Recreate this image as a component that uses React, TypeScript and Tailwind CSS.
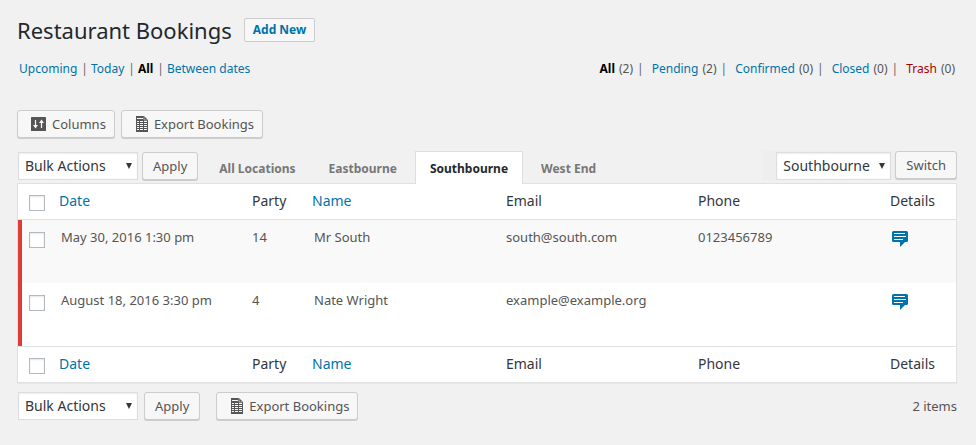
import React from "react";

type Booking = {
  id: number;
  date: string;
  party: string;
  name: string;
  email: string;
  phone: string;
};

const bookings: Booking[] = [
  { id: 1, date: "May 30, 2016 1:30 pm", party: "14", name: "Mr South", email: "south@south.com", phone: "0123456789" },
  { id: 2, date: "August 18, 2016 3:30 pm", party: "4", name: "Nate Wright", email: "example@example.org", phone: "" },
];

const link = "text-[#0073aa] hover:text-[#00a0d2]";

function ColumnsIcon() {
  return (
    <svg width="15" height="14" viewBox="0 0 15 14" aria-hidden="true">
      <rect width="15" height="14" rx="0.5" fill="#555" />
      <path d="M4.500 3v6M10.500 5v6" stroke="#f7f7f7" strokeWidth="1.2" />
      <path d="M2 8h5L4.500 11.500zM8 6h5L10.500 2.500z" fill="#f7f7f7" />
    </svg>
  );
}

function SpreadsheetIcon() {
  return (
    <svg width="13" height="16" viewBox="0 0 13 16" aria-hidden="true">
      <path d="M1 0h8l4 4v12H1z" fill="#555" />
      <path d="M9 0.500V4h3.500" fill="none" stroke="#f7f7f7" strokeWidth="0.5" />
      <path
        d="M2 2h6v1H2zM2 5h2v1H2zM5 5h3v1H5zM9 5h3v1H9zM2 7h2v1H2zM5 7h3v1H5zM9 7h3v1H9zM2 9h2v1H2zM5 9h3v1H5zM9 9h3v1H9zM2 11h2v1H2zM5 11h3v1H5zM9 11h3v1H9zM2 13h2v1H2zM5 13h3v1H5zM9 13h3v1H9z"
        fill="#f7f7f7"
      />
    </svg>
  );
}

function CommentIcon() {
  return (
    <svg width="17" height="16" viewBox="0 0 17 16" aria-hidden="true">
      <path d="M1.500 0h13q1.500 0 1.500 1.500v8q0 1.500-1.500 1.500h-1.500l-5 5v-5H1.500q-1.500 0-1.500-1.500v-8q0-1.500 1.500-1.500z" fill="#0073aa" />
      <path d="M2 2.500h11M2 5.500h12M2 8.500h9" stroke="#fff" />
    </svg>
  );
}

function Button({ children, icon }: { children: React.ReactNode; icon?: React.ReactNode }) {
  return (
    <button
      type="button"
      className={
        "flex h-7 shrink-0 items-center gap-1.5 whitespace-nowrap rounded-[3px] border border-[#ccc] bg-[#f7f7f7] text-[13px] text-[#555] shadow-[0_1px_0_#ccc] " +
        (icon ? "pr-2 pl-[13px]" : "px-2.5")
      }
    >
      {icon}
      {children}
    </button>
  );
}

function Select({ label, options, width }: { label: string; options: string[]; width: string }) {
  return (
    <div className={"relative shrink-0 " + width}>
      <select
        aria-label={label}
        className="block h-7 w-full appearance-none border border-[#ddd] bg-white pr-5 pl-1.5 text-[14px] text-[#32373c] shadow-[inset_0_1px_2px_rgba(0,0,0,0.07)]"
      >
        {options.map((o) => (
          <option key={o}>{o}</option>
        ))}
      </select>
      <svg className="pointer-events-none absolute top-[11px] right-1.5" width="6" height="6" viewBox="0 0 6 6" aria-hidden="true">
        <path d="M0 0h6L3 6z" fill="#32373c" />
      </svg>
    </div>
  );
}

function Checkbox({ label }: { label: string }) {
  return (
    <input
      type="checkbox"
      aria-label={label}
      className="block size-4 appearance-none border border-[#b4b9be] bg-white shadow-[inset_0_1px_2px_rgba(0,0,0,0.1)] checked:bg-[#0073aa]"
    />
  );
}

function HeadingRow({ label }: { label: string }) {
  const cell = "px-2 pb-px font-normal";
  return (
    <tr className="h-9 text-left text-[14px] text-[#32373c]">
      <td className="pt-0.5 pl-[11px]">
        <Checkbox label={label} />
      </td>
      <th scope="col" className={cell}>
        <a href="#date" className={link}>Date</a>
      </th>
      <th scope="col" className={cell}>Party</th>
      <th scope="col" className={cell}>
        <a href="#name" className={link}>Name</a>
      </th>
      <th scope="col" className={cell}>Email</th>
      <th scope="col" className={cell}>Phone</th>
      <th scope="col" className={cell}>Details</th>
    </tr>
  );
}

function Divider() {
  return <span className="pr-[3px] pl-1 text-[#666]">|</span>;
}

export default function App() {
  const dates = ["Upcoming", "Today", "All", "Between dates"];
  const statuses: [string, number][] = [["All", 2], ["Pending", 2], ["Confirmed", 0], ["Closed", 0], ["Trash", 0]];
  const tabs = ["All Locations", "Eastbourne", "Southbourne", "West End"];

  return (
    <main className="min-h-screen bg-[#f1f1f1] pr-[19px] pb-6 pl-[17px] font-['Noto_Sans','Open_Sans',sans-serif] text-[13px] leading-5 text-[#555]">
      <header className="flex items-center gap-3 pt-[15px]">
        <h1 className="text-[22px] leading-[30px] text-[#23282d]">Restaurant Bookings</h1>
        <button type="button" className="h-6 rounded-[2px] border border-[#ccc] bg-[#f7f7f7] px-2 text-[12px] font-bold leading-4 text-[#0073aa]">
          Add New
        </button>
      </header>

      <div className="flex flex-wrap justify-between px-0.5 pt-[14px] text-[12px]">
        <nav aria-label="Dates" className="flex">
          {dates.map((d, i) => (
            <React.Fragment key={d}>
              {i > 0 && <Divider />}
              <a href="#dates" className={d === "All" ? "font-bold text-black" : link}>{d}</a>
            </React.Fragment>
          ))}
        </nav>
        <nav aria-label="Status" className="flex">
          {statuses.map(([s, n], i) => (
            <React.Fragment key={s}>
              {i > 0 && <span className="pr-2 pl-1 text-[#666]">|</span>}
              <a href="#status" className={s === "All" ? "font-bold text-black" : s === "Trash" ? "text-[#a00]" : link}>{s}</a>
              <span className="pl-1">({n})</span>
            </React.Fragment>
          ))}
        </nav>
      </div>

      <div className="flex gap-1.5 pt-[31px]">
        <Button icon={<ColumnsIcon />}>Columns</Button>
        <Button icon={<SpreadsheetIcon />}>Export Bookings</Button>
      </div>

      <div className="flex items-start pt-[13px] pl-px">
        <div className="flex gap-1 pt-px">
          <Select label="Bulk action" options={["Bulk Actions", "Delete"]} width="w-[120px]" />
          <Button>Apply</Button>
        </div>
        <nav aria-label="Locations" className="-mb-px flex gap-[3px] pl-1.5">
          {tabs.map((t) => (
            <a
              key={t}
              href="#location"
              className={
                "relative h-[33px] border border-b-0 px-[14px] text-[12px] font-bold leading-[34px] whitespace-nowrap " +
                (t === "Southbourne" ? "border-[#dedede] bg-white text-[#23282d]" : "border-transparent text-[#777]")
              }
            >
              {t}
            </a>
          ))}
        </nav>
        <div className="ml-auto flex gap-1 bg-[#eee] pl-3.5">
          <div className="pt-px">
            <Select label="Location" options={["Southbourne", "Eastbourne", "West End"]} width="w-[115px]" />
          </div>
          <Button>Switch</Button>
        </div>
      </div>

      <div className="border border-[#e1e1e1] bg-white shadow-[0_1px_1px_rgba(0,0,0,0.04)]">
        <table className="w-full table-fixed border-separate border-spacing-0">
          <colgroup>
            <col className="w-[33px]" />
            <col className="w-[193px]" />
            <col className="w-[60px]" />
            <col className="w-[194px]" />
            <col className="w-[192px]" />
            <col className="w-[192px]" />
            <col className="w-[74px]" />
          </colgroup>
          <thead className="[&_td]:border-b [&_td]:border-[#e1e1e1] [&_th]:border-b [&_th]:border-[#e1e1e1]">
            <HeadingRow label="Select all" />
          </thead>
          <tbody>
            {bookings.map((b) => (
              <tr key={b.id} className="h-[63px] align-top odd:bg-[#f9f9f9]">
                <td className="p-0">
                  <div className="h-[63px] border-l-4 border-[#dd3d36] pt-3 pl-[7px]">
                    <Checkbox label={"Select booking for " + b.name} />
                  </div>
                </td>
                <td className="px-2.5 py-[7px]">{b.date}</td>
                <td className="px-2 py-[7px]">{b.party}</td>
                <td className="px-2.5 py-[7px]">{b.name}</td>
                <td className="px-2 py-[7px]">{b.email}</td>
                <td className="px-2 py-[7px]">{b.phone}</td>
                <td className="px-2.5 pt-[11px]">
                  <button type="button" aria-label="Details" className="block">
                    <CommentIcon />
                  </button>
                </td>
              </tr>
            ))}
          </tbody>
          <tfoot className="[&_td]:border-t [&_td]:border-[#e1e1e1] [&_th]:border-t [&_th]:border-[#e1e1e1]">
            <HeadingRow label="Select all, footer" />
          </tfoot>
        </table>
      </div>

      <div className="flex items-center pt-[9px] pl-px">
        <Select label="Bulk action, footer" options={["Bulk Actions", "Delete"]} width="w-[120px]" />
        <div className="flex gap-4 pl-1.5">
          <Button>Apply</Button>
          <Button icon={<SpreadsheetIcon />}>Export Bookings</Button>
        </div>
        <span className="ml-auto">2 items</span>
      </div>
    </main>
  );
}
